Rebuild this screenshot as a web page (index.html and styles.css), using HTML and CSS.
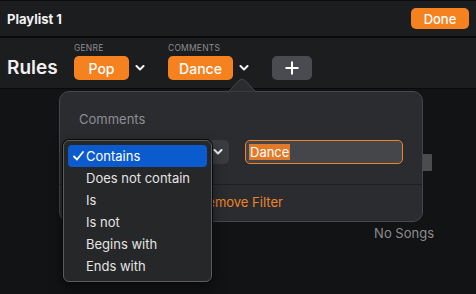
FILE: index.html
```html
<!DOCTYPE html>
<html lang="en">
<head>
    <meta charset="UTF-8">
    <title>Playlist 1</title>
    <link rel="stylesheet" href="styles.css">
</head>
<body>
    <div class="titlebar">
        <div class="title">Playlist 1</div>
        <button class="done">Done</button>
    </div>

    <div class="rules-bar">
        <div class="rules-title">Rules</div>
        <div class="filter">
            <div class="filter-label">Genre</div>
            <div class="filter-row">
                <button class="chip chip-pop">Pop</button>
                <svg class="chev" width="10" height="6" viewBox="0 0 10 6"><polyline points="1.5,1 5,4.5 8.5,1" /></svg>
            </div>
        </div>
        <div class="filter">
            <div class="filter-label">Comments</div>
            <div class="filter-row">
                <button class="chip chip-dance">Dance</button>
                <svg class="chev" width="10" height="6" viewBox="0 0 10 6"><polyline points="1.5,1 5,4.5 8.5,1" /></svg>
            </div>
        </div>
        <button class="add">
            <svg width="14" height="14" viewBox="0 0 14 14"><path d="M7 0.5v13M0.5 7h13" /></svg>
        </button>
    </div>

    <div class="main">
        <div class="peek"></div>
        <div class="empty">No Songs</div>
    </div>

    <!-- popover for the Comments filter -->
    <svg class="arrow" width="28" height="14" viewBox="0 0 28 14"><path d="M0 14 L11 2.5 Q14 -0.5 17 2.5 L28 14 Z" /></svg>
    <div class="popover">
        <div class="pop-label">Comments</div>
        <div class="pop-row">
            <!-- the open menu covers the select's label -->
            <div class="select">
                <svg class="chev" width="10" height="6" viewBox="0 0 10 6"><polyline points="1.5,1 5,4.5 8.5,1" /></svg>
            </div>
            <div class="field"><span class="sel">Dance</span></div>
        </div>
        <div class="pop-footer">Remove Filter</div>
    </div>

    <div class="menu">
        <div class="item active">
            <svg class="check" width="11" height="10" viewBox="0 0 11 10"><polyline points="1,5.5 4,8.5 10,1" /></svg>
            Contains
        </div>
        <div class="item">Does not contain</div>
        <div class="item">Is</div>
        <div class="item">Is not</div>
        <div class="item">Begins with</div>
        <div class="item">Ends with</div>
    </div>
</body>
</html>
```

FILE: styles.css
```css
body {
    margin: 0;
    width: 476px;
    height: 294px;
    overflow: hidden;
    background: #121315;
    font-family: Inter, 'Liberation Sans', sans-serif;
    color: #ececec;
    position: relative;
}

button {
    font-family: inherit;
    border: none;
    cursor: pointer;
}

.titlebar {
    height: 35px;
    border-top: 1px solid #0a0a0b;
    border-bottom: 2px solid #0a0a0b;
    background: #1c1d1f;
    display: flex;
    align-items: center;
    justify-content: space-between;
    padding: 0 7px 0 7px;
}

.title {
    font-size: 13px;
    font-weight: 700;
    color: #f2f2f2;
}

.done {
    width: 58px;
    height: 21px;
    border-radius: 5px;
    background: #f6821f;
    color: #fff;
    font-size: 13px;
    font-weight: 500;
}

.rules-bar {
    height: 51px;
    background: #1c1d1f;
    border-bottom: 1px solid #0a0a0b;
    display: flex;
    align-items: flex-end;
    padding: 0 7px 8px 7px;
    box-sizing: border-box;
}

.rules-title {
    font-size: 19px;
    font-weight: 600;
    color: #f0f0f0;
    width: 67px;
    line-height: 24px;
}

.filter {
    display: flex;
    flex-direction: column;
    gap: 3px;
    margin-right: 23px;
}

.filter-label {
    font-size: 8.5px;
    text-transform: uppercase;
    letter-spacing: 0.2px;
    color: #8c8c90;
    line-height: 10px;
}

.filter-row {
    display: flex;
    align-items: center;
    gap: 6px;
}

.chip {
    height: 24px;
    border-radius: 5px;
    background: #f6821f;
    color: #fff;
    font-size: 14px;
    font-weight: 500;
    padding: 0;
}

.chip-pop { width: 55px; }
.chip-dance { width: 65px; }

.chev {
    fill: none;
    stroke: #f2f2f2;
    stroke-width: 2;
    stroke-linecap: round;
    stroke-linejoin: round;
}

.add {
    width: 40px;
    height: 24px;
    border-radius: 5px;
    background: #4a4b50;
    display: flex;
    align-items: center;
    justify-content: center;
    padding: 0;
}

.add svg {
    stroke: #fff;
    stroke-width: 2;
}

.main {
    position: relative;
    height: 204px;
    display: flex;
    justify-content: flex-end;
    padding: 136px 42px 0 0;
    box-sizing: border-box;
}

.empty {
    font-size: 13px;
    color: #8b8b8f;
}

.peek {
    position: absolute;
    left: 418px;
    top: 65px;
    width: 14px;
    height: 17px;
    background: #4b4c4e;
    border-radius: 1px;
}

.arrow {
    position: absolute;
    left: 228px;
    top: 78px;
    fill: #2b2c30;
    stroke: #46474b;
    stroke-width: 1;
    z-index: 3;
}

.popover {
    position: absolute;
    left: 59px;
    top: 91px;
    width: 364px;
    height: 131px;
    box-sizing: border-box;
    background: #2b2c30;
    border: 1px solid #46474b;
    border-radius: 10px;
    display: flex;
    flex-direction: column;
    z-index: 2;
}

.pop-label {
    font-size: 13px;
    color: #8e8e92;
    padding: 19px 0 0 19px;
    line-height: 16px;
}

.pop-row {
    display: flex;
    align-items: center;
    gap: 16px;
    padding: 13px 0 0 19px;
}

.select {
    width: 150px;
    height: 24px;
    border-radius: 5px;
    background: #3b3c40;
    display: flex;
    align-items: center;
    justify-content: flex-end;
    padding: 0 6px 0 10px;
    box-sizing: border-box;
}

.field {
    width: 158px;
    height: 24px;
    box-sizing: border-box;
    border: 1px solid #f08326;
    border-radius: 5px;
    background: #45464a;
    display: flex;
    align-items: center;
    padding-left: 3px;
    font-size: 13px;
}

.sel {
    background: #e27a2a;
    color: #fff;
    padding: 0 1px;
    line-height: 16px;
}

.pop-footer {
    margin-top: 20px;
    border-top: 1px solid #1e1f22;
    flex: 1;
    display: flex;
    align-items: center;
    justify-content: center;
    color: #f08326;
    font-size: 13px;
    padding-bottom: 2px;
}

.menu {
    position: absolute;
    left: 63px;
    top: 140px;
    width: 149px;
    box-sizing: border-box;
    padding: 4px;
    background: #262729;
    border: 1px solid #5c5c5f;
    border-radius: 6px;
    box-shadow: 0 0 0 1px #0a0a0b, 0 6px 14px rgba(0,0,0,0.5);
    z-index: 4;
}

.item {
    height: 22px;
    display: flex;
    align-items: center;
    padding-left: 18px;
    font-size: 13px;
    color: #e4e4e4;
    border-radius: 4px;
    position: relative;
}

.item.active {
    background: #0b5bcf;
    color: #fff;
}

.check {
    position: absolute;
    left: 5px;
    top: 6px;
    fill: none;
    stroke: #fff;
    stroke-width: 1.8;
    stroke-linecap: round;
    stroke-linejoin: round;
}
```
